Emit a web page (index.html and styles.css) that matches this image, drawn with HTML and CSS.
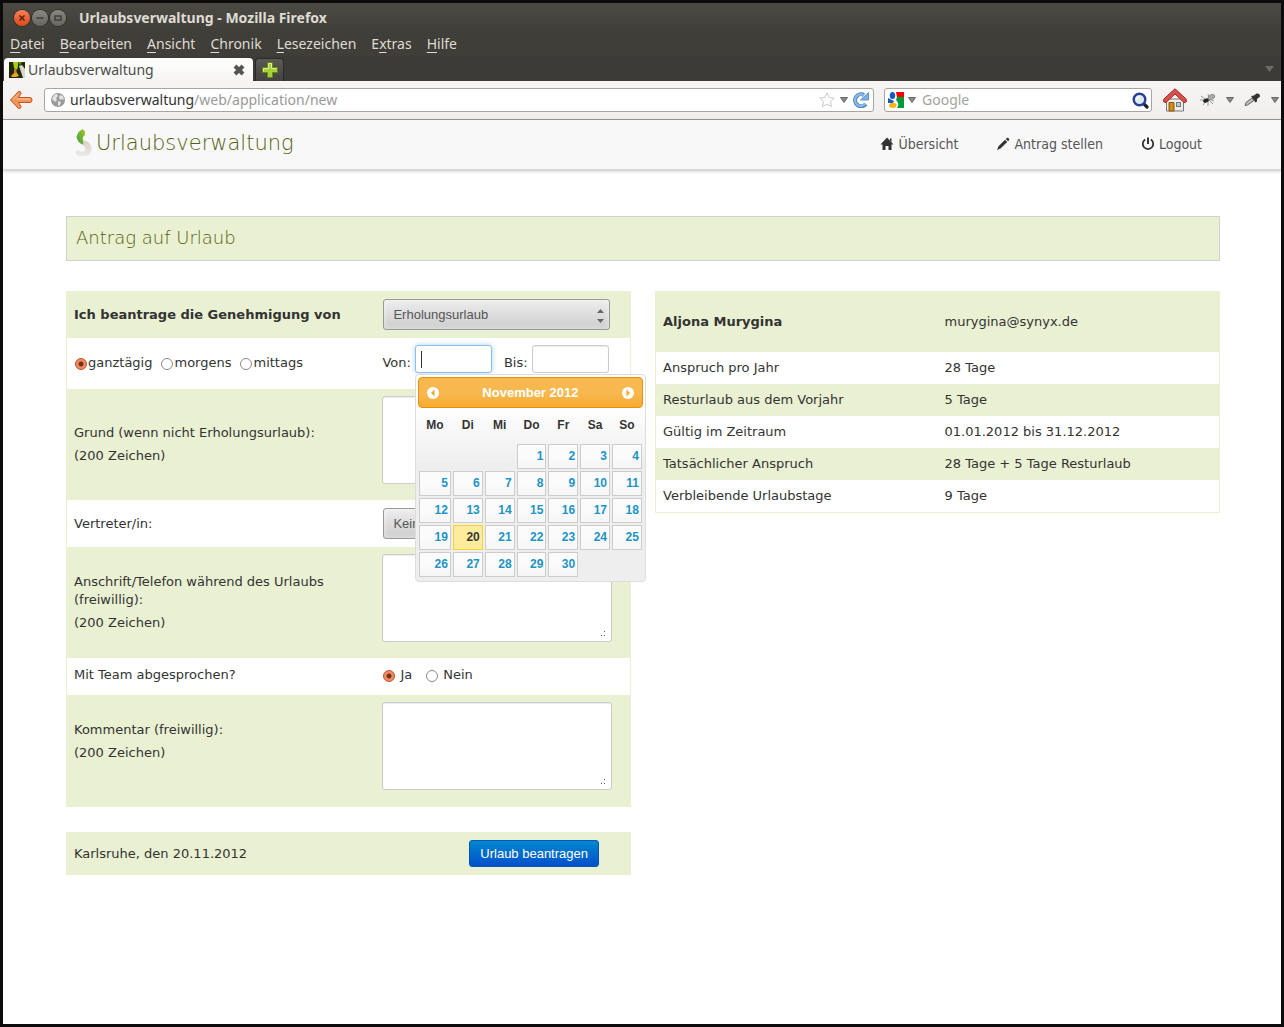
FILE: index.html
```html
<!DOCTYPE html>
<html lang="de">
<head>
  <meta charset="UTF-8">
  <meta name="viewport" content="width=device-width, initial-scale=1.0">
  <title>Urlaubsverwaltung</title>
  <link rel="stylesheet" href="styles.css">
</head>
<body>

<div class="window">

  <!-- Browser chrome -->
  <div class="titlebar">
    <button type="button" class="win-btn close" aria-label="Schließen">
      <svg width="16" height="16" viewBox="0 0 16 16"><path d="M5.5 5.5l5 5M10.5 5.5l-5 5" stroke="#4a2015" stroke-width="1.4"/></svg>
    </button>
    <button type="button" class="win-btn" aria-label="Minimieren">
      <svg width="16" height="16" viewBox="0 0 16 16"><path d="M4.500 8h7" stroke="#3a3934" stroke-width="1.4"/></svg>
    </button>
    <button type="button" class="win-btn" aria-label="Maximieren">
      <svg width="16" height="16" viewBox="0 0 16 16"><rect x="5" y="6" width="6" height="4" fill="none" stroke="#3a3934" stroke-width="1.300"/></svg>
    </button>
    <span class="window-title">Urlaubsverwaltung - Mozilla Firefox</span>
  </div>

  <div class="menubar">
    <a href="#"><u>D</u>atei</a>
    <a href="#"><u>B</u>earbeiten</a>
    <a href="#"><u>A</u>nsicht</a>
    <a href="#"><u>C</u>hronik</a>
    <a href="#"><u>L</u>esezeichen</a>
    <a href="#">E<u>x</u>tras</a>
    <a href="#"><u>H</u>ilfe</a>
  </div>

  <div class="tabs">
    <div class="tab">
      <svg width="16" height="16" viewBox="0 0 16 16">
        <rect width="16" height="16" fill="#1c2a05"/>
        <path d="M4 0h5v4l-1 4-3-2z" fill="#a6cf12"/>
        <path d="M10 4l3-1 3 4v9h-2z" fill="#d9d6d2"/>
        <path d="M9 0h4l-2 4z" fill="#5c8a12"/>
        <path d="M5 7h2l1 4H5z" fill="#c97a35"/>
        <path d="M2 14l3-3h3l2 3-3 1H3z" fill="#f0a021"/>
      </svg>
      <span class="tab-title">Urlaubsverwaltung</span>
      <button type="button" class="icon-btn" aria-label="Tab schließen">
        <svg width="14" height="14" viewBox="0 0 14 14"><path d="M3 3l8 8M11 3l-8 8" stroke="#55544f" stroke-width="4"/></svg>
      </button>
    </div>
    <button type="button" class="new-tab" aria-label="Neuer Tab">
      <svg width="16" height="16" viewBox="0 0 16 16"><path d="M5.500 .5h5v5h5v5h-5v5h-5v-5h-5v-5h5z" fill="#a9cf38" stroke="#5f8a14"/><path d="M1.500 9.500v-3h5v-5h3v5h5" fill="none" stroke="#dff08e"/></svg>
    </button>
    <svg class="tab-list" width="9" height="6" viewBox="0 0 9 6"><path d="M0 0h9L4.500 6z" fill="#6d6c68"/></svg>
  </div>

  <div class="toolbar">
    <button type="button" class="icon-btn" aria-label="Zurück">
      <svg width="24" height="20" viewBox="0 0 24 20"><path d="M1.500 10L9.500 1.500q2.500-.5 2.500 2L9.500 7.500H21q2 0 2 2.500t-2 2.500H9.500l2.500 4q0 2.500-2.500 2z" fill="#f0955a" stroke="#c8531c" stroke-linejoin="round"/><path d="M4 9.500l5-5M8 9h13" stroke="#fac9a5" fill="none"/></svg>
    </button>

    <div class="urlbar">
      <svg width="14" height="14" viewBox="0 0 14 14"><circle cx="7" cy="7" r="7" fill="#9a9a9a"/><path d="M1 6l2-4 3-1 1 2-2 2 1 2-2 2zM9 2l3 1 1 4-2-1-2 1-1-3zM7 8l3 1-1 3-2 1z" fill="#e4e4e4"/></svg>
      <label for="url">urlaubsverwaltung</label>
      <input type="text" id="url" value="/web/application/new">
      <svg width="16" height="16" viewBox="0 0 16 16"><path d="M8 .8l2.200 4.700 5.200.6-3.900 3.500 1.100 5.100L8 12.200l-4.600 2.500 1.100-5.100L.6 6.100l5.200-.6z" fill="#fff" stroke="#c9c9c9" stroke-linejoin="round"/></svg>
      <svg class="arrow" width="8" height="6" viewBox="0 0 8 6"><path d="M.5.5h7L4 5.500z" fill="#8b8b8b" stroke="#666"/></svg>
      <svg width="16" height="16" viewBox="0 0 16 16"><path d="M12.800 12A6 6 0 1 1 11 3" fill="none" stroke="#4a83bf" stroke-width="4"/><path d="M12.400 11.600A5.800 5.800 0 1 1 11 3.300" fill="none" stroke="#8fb9e2" stroke-width="2.200"/><path d="M15.500.5v7.500h-8z" fill="#7fb0de" stroke="#4a83bf" stroke-width=".8"/></svg>
    </div>

    <div class="searchbar">
      <svg width="16" height="16" viewBox="0 0 16 16">
        <rect width="16" height="16" fill="#fff"/>
        <path d="M8 0h8v5H9z" fill="#f00"/>
        <path d="M9 5h7v11H9q3-4-1-8z" fill="#009a3d"/>
        <ellipse cx="4.500" cy="3.500" rx="2.700" ry="3.500" fill="#1259c3"/>
        <path d="M0 6l6 3-1 2-5 0z" fill="#1259c3"/>
        <ellipse cx="4.800" cy="13.300" rx="3.800" ry="2.600" fill="#f5b70c"/>
      </svg>
      <svg class="arrow" width="8" height="6" viewBox="0 0 8 6"><path d="M.5.5h7L4 5.500z" fill="#8b8b8b" stroke="#666"/></svg>
      <input type="text" placeholder="Google" aria-label="Suche">
      <svg width="17" height="17" viewBox="0 0 17 17"><path d="M12 12l3 3" stroke="#222" stroke-width="3.200" stroke-linecap="round"/><circle cx="7.500" cy="7.500" r="5.800" fill="#dfe8f5" stroke="#2b3f94" stroke-width="2.400"/><path d="M4.800 7.500a2.700 2.700 0 0 1 2.700-2.700" fill="none" stroke="#fff" stroke-width="1.500"/></svg>
    </div>

    <button type="button" class="icon-btn home" aria-label="Startseite">
      <svg width="24" height="24" viewBox="0 0 24 24">
        <path d="M3.500 11h17v12h-17z" fill="#eeeeec" stroke="#777"/>
        <path d="M6 14.500h5V23H6z" fill="#cf8a1c" stroke="#8a5606"/>
        <rect x="13.500" y="14.500" width="4" height="4" fill="#b9cfd4" stroke="#777"/>
        <path d="M12 .8L.8 11v3l2.200.5L12 6l9 8.500 2.200-.5v-3z" fill="#d9504d" stroke="#a52724" stroke-linejoin="round"/>
      </svg>
    </button>
    <button type="button" class="icon-btn addon" aria-label="Firebug">
      <svg width="16" height="14" viewBox="0 0 16 14"><path d="M1 3l4 3M0 7h5M3 12l3-4M8 13V8M13 11L9 7M8 1l1 4M14 8l-5-2" stroke="#999"/><ellipse cx="6" cy="7.500" rx="3" ry="2" transform="rotate(-25 6 7.500)" fill="#222"/><ellipse cx="11.500" cy="4" rx="3.500" ry="2.300" transform="rotate(-25 11.500 4)" fill="#a9a9a9" stroke="#777" stroke-width=".6"/></svg>
    </button>
    <svg class="arrow" width="8" height="6" viewBox="0 0 8 6"><path d="M.5.5h7L4 5.500z" fill="#8b8b8b" stroke="#666"/></svg>
    <button type="button" class="icon-btn addon" aria-label="Pipette">
      <svg width="17" height="14" viewBox="0 0 17 14"><path d="M1 12.500l1-3L8 5l2 2.500-6.500 4.500z" fill="#bdbdbd" stroke="#666"/><path d="M7 3l3-.5L12.500.5q3.500-.5 3.500 3L13 6v2.500l-1.500 1z" fill="#333"/></svg>
    </button>
    <svg class="arrow" width="8" height="6" viewBox="0 0 8 6"><path d="M.5.5h7L4 5.500z" fill="#8b8b8b" stroke="#666"/></svg>
  </div>

  <!-- Page header -->
  <header class="header">
    <a class="brand" href="#">
      <svg width="18" height="28" viewBox="0 0 18 28">
        <defs>
          <linearGradient id="leaf" x1="1" y1="0" x2="0" y2="1"><stop offset="0" stop-color="#a6c822"/><stop offset="1" stop-color="#3f9a50"/></linearGradient>
          <linearGradient id="tail" x1="0" y1="0" x2="0" y2="1"><stop offset="0" stop-color="#d3d0c8"/><stop offset="1" stop-color="#eeebe7"/></linearGradient>
        </defs>
        <path d="M8 11q8.500 2 8.500 9-.5 7.500-8.500 7.500-5 0-7.500-3L2 21q4 2.500 7 1.500 3-2-1-7z" fill="url(#tail)"/>
        <path d="M7.500.3L10 2.200l-.2 4Q7 8 8 11l.3 5Q2 13 1.500 8 2.500 2.500 7.500.3z" fill="url(#leaf)"/>
      </svg>
      <span>Urlaubsverwaltung</span>
    </a>
    <nav class="nav">
      <a href="#">
        <svg width="14" height="14" viewBox="0 0 14 14"><path d="M7 .5L13.500 7.500H11.500V13H8.500V9h-3v4h-3V7.500H.5zM10 1.500h1.500V5L10 3.500z" fill="#333"/></svg>
        Übersicht
      </a>
      <a href="#">
        <svg width="14" height="14" viewBox="0 0 14 14"><path d="M11 .8q.6-.4 1.200.2l.8.8q.6.6.2 1.200l-1.200 1.200-2.200-2.200zM9 2.800L11.200 5 4.500 11.500 1 13l1.500-3.700z" fill="#333"/></svg>
        Antrag stellen
      </a>
      <a href="#">
        <svg width="14" height="14" viewBox="0 0 14 14"><path d="M4.200 2.500a5.200 5.200 0 1 0 5.600 0" fill="none" stroke="#333" stroke-width="1.800"/><path d="M7 .5v6.500" stroke="#333" stroke-width="2"/></svg>
        Logout
      </a>
    </nav>
  </header>

  <main class="content">
    <h1 class="page-title">Antrag auf Urlaub</h1>

    <div class="columns">
      <form class="application">
        <div class="form-rows">
          <div class="row short">
            <label class="strong" for="vacationType">Ich beantrage die Genehmigung von</label>
            <div class="select-box">
              <select id="vacationType"><option>Erholungsurlaub</option></select>
              <svg width="7" height="14" viewBox="0 0 7 14"><path d="M0 4L3.500 0 7 4zM0 10h7l-3.500 4z" fill="#666"/></svg>
            </div>
          </div>

          <div class="row dates">
            <div class="radios day-length">
              <label><input type="radio" name="length" checked>ganztägig</label>
              <label><input type="radio" name="length">morgens</label>
              <label><input type="radio" name="length">mittags</label>
            </div>
            <div class="period">
              <label for="from">Von:</label>
              <div class="date-field">
                <input class="active" type="text" id="from">
                <span class="caret"></span>

                <!-- Calendar popup -->
                <div class="datepicker">
                  <div class="dp-header">
                    <button type="button" class="icon-btn" aria-label="Zurück">
                      <svg width="12" height="12" viewBox="0 0 12 12"><circle cx="6" cy="6" r="6" fill="#fff"/><path d="M7.500 2.500v7L4 6z" fill="#f6a828"/></svg>
                    </button>
                    <span>November 2012</span>
                    <button type="button" class="icon-btn" aria-label="Vor">
                      <svg width="12" height="12" viewBox="0 0 12 12"><circle cx="6" cy="6" r="6" fill="#fff"/><path d="M4.500 2.500v7L8 6z" fill="#f6a828"/></svg>
                    </button>
                  </div>
                  <table>
                    <thead>
                      <tr><th>Mo</th><th>Di</th><th>Mi</th><th>Do</th><th>Fr</th><th>Sa</th><th>So</th></tr>
                    </thead>
                    <tbody>
                      <tr><td></td><td></td><td></td><td><a href="#">1</a></td><td><a href="#">2</a></td><td><a href="#">3</a></td><td><a href="#">4</a></td></tr>
                      <tr><td><a href="#">5</a></td><td><a href="#">6</a></td><td><a href="#">7</a></td><td><a href="#">8</a></td><td><a href="#">9</a></td><td><a href="#">10</a></td><td><a href="#">11</a></td></tr>
                      <tr><td><a href="#">12</a></td><td><a href="#">13</a></td><td><a href="#">14</a></td><td><a href="#">15</a></td><td><a href="#">16</a></td><td><a href="#">17</a></td><td><a href="#">18</a></td></tr>
                      <tr><td><a href="#">19</a></td><td><a class="today" href="#">20</a></td><td><a href="#">21</a></td><td><a href="#">22</a></td><td><a href="#">23</a></td><td><a href="#">24</a></td><td><a href="#">25</a></td></tr>
                      <tr><td><a href="#">26</a></td><td><a href="#">27</a></td><td><a href="#">28</a></td><td><a href="#">29</a></td><td><a href="#">30</a></td><td></td><td></td></tr>
                    </tbody>
                  </table>
                </div>
              </div>
              <label class="to" for="to">Bis:</label>
              <div class="date-field">
                <input type="text" id="to">
              </div>
            </div>
          </div>

          <div class="row tall">
            <label for="reason">Grund (wenn nicht Erholungsurlaub): <small>(200 Zeichen)</small></label>
            <div class="area"><textarea id="reason"></textarea></div>
          </div>

          <div class="row short">
            <label for="rep">Vertreter/in:</label>
            <div class="select-box">
              <select id="rep"><option>Kein Vertreter</option></select>
              <svg width="7" height="14" viewBox="0 0 7 14"><path d="M0 4L3.500 0 7 4zM0 10h7l-3.500 4z" fill="#666"/></svg>
            </div>
          </div>

          <div class="row tall">
            <label for="address">Anschrift/Telefon während des Urlaubs (freiwillig): <small>(200 Zeichen)</small></label>
            <div class="area">
              <textarea id="address"></textarea>
              <svg width="5" height="5" viewBox="0 0 5 5"><path d="M0 4h1v1H0zM3 4h1v1H3zM3 0h1v1H3z" fill="#555"/></svg>
            </div>
          </div>

          <div class="row team">
            <span>Mit Team abgesprochen?</span>
            <div class="radios">
              <label><input type="radio" name="team" checked>Ja</label>
              <label><input type="radio" name="team">Nein</label>
            </div>
          </div>

          <div class="row tall comment">
            <label for="comment">Kommentar (freiwillig): <small>(200 Zeichen)</small></label>
            <div class="area">
              <textarea id="comment"></textarea>
              <svg width="5" height="5" viewBox="0 0 5 5"><path d="M0 4h1v1H0zM3 4h1v1H3zM3 0h1v1H3z" fill="#555"/></svg>
            </div>
          </div>
        </div>

        <div class="submit-row">
          <span>Karlsruhe, den 20.11.2012</span>
          <button type="submit" class="btn-primary">Urlaub beantragen</button>
        </div>
      </form>

      <table class="account">
        <thead>
          <tr><th>Aljona Murygina</th><td>murygina@synyx.de</td></tr>
        </thead>
        <tbody>
          <tr><td>Anspruch pro Jahr</td><td>28 Tage</td></tr>
          <tr><td>Resturlaub aus dem Vorjahr</td><td>5 Tage</td></tr>
          <tr><td>Gültig im Zeitraum</td><td>01.01.2012 bis 31.12.2012</td></tr>
          <tr><td>Tatsächlicher Anspruch</td><td>28 Tage + 5 Tage Resturlaub</td></tr>
          <tr><td>Verbleibende Urlaubstage</td><td>9 Tage</td></tr>
        </tbody>
      </table>
    </div>
  </main>

</div>

</body>
</html>
```
FILE: styles.css
```css
/* General Styles */
* {
  box-sizing: border-box;
}

body {
  margin: 0;
  font-family: "DejaVu Sans", sans-serif;
  font-size: 13px;
  line-height: 18px;
  color: #333;
  background: #fff;
}

a {
  color: inherit;
  text-decoration: none;
}

svg {
  display: block;
  flex: none;
}

button {
  cursor: pointer;
}

.window {
  min-height: 100vh;
  border: 3px solid #0d0b0b;
  overflow: hidden;
}

.icon-btn {
  padding: 0;
  border: none;
  background: none;
}

/* Browser chrome */
.titlebar,
.menubar,
.tabs,
.toolbar {
  display: flex;
  align-items: center;
  font-family: "Noto Sans", sans-serif;
  font-size: 14px;
}

.titlebar {
  height: 29px;
  gap: 2px;
  padding-left: 11px;
  background: linear-gradient(#4b4a45, #3f3e39);
  color: #dfdbd2;
  font-weight: bold;
}

.win-btn {
  width: 16px;
  height: 16px;
  padding: 0;
  border: none;
  border-radius: 50%;
  background: linear-gradient(#8a8981, #66655f);
  box-shadow: 0 0 0 1px #34332f;
}

.win-btn.close {
  background: linear-gradient(#f58058, #df4a16);
}

.window-title {
  padding-left: 11px;
}

.menubar {
  height: 24px;
  gap: 15px;
  padding-left: 7px;
  background: #3f3e39;
  color: #dfdbd2;
}

.menubar u {
  text-underline-offset: 3px;
}

.tabs {
  height: 25px;
  align-items: flex-end;
  gap: 2px;
  padding-left: 1px;
  background: #3c3b37;
}

.tab {
  display: flex;
  align-items: center;
  gap: 3px;
  width: 249px;
  height: 23px;
  padding: 0 7px 0 5px;
  border-radius: 4px 4px 0 0;
  background: linear-gradient(#fff, #f5f4f2);
  color: #4c4c4c;
}

.tab-title {
  flex: 1;
}

.new-tab {
  display: flex;
  align-items: center;
  justify-content: center;
  width: 29px;
  height: 23px;
  padding: 0;
  border: 1px solid #2b2a27;
  border-bottom: none;
  border-radius: 4px 4px 0 0;
  background: linear-gradient(#5a5954, #43423e);
}

.tab-list {
  margin: 0 7px 9px auto;
}

.toolbar {
  height: 39px;
  padding: 0 2px 0 6px;
  border-bottom: 1px solid #999;
  background: linear-gradient(#f6f5f3, #f0efed);
}

.urlbar,
.searchbar {
  display: flex;
  align-items: center;
  height: 24px;
  border: 1px solid #a8a5a1;
  border-radius: 3px;
  background: #fff;
}

.urlbar {
  flex: 1;
  gap: 5px;
  margin: 0 10px 0 11px;
  padding: 0 4px 0 6px;
}

.urlbar input,
.searchbar input {
  flex: 1;
  min-width: 0;
  padding: 0;
  border: none;
  outline: none;
  background: none;
  font: inherit;
  color: #999;
}

.urlbar input {
  margin-left: -5px;
}

.searchbar {
  width: 268px;
  gap: 4px;
  padding: 0 2px 0 3px;
}

.searchbar input {
  margin-left: 2px;
}

.searchbar input::placeholder {
  color: #a5a29e;
}

.home {
  margin: 0 13px 0 11px;
}

.addon {
  margin: 0 10px 0 0;
}

.arrow + .addon {
  margin-left: 10px;
}

/* Page header */
.header {
  display: flex;
  justify-content: space-between;
  align-items: center;
  height: 50px;
  padding: 0 79px 4px 72px;
  background: #f8f8f8;
  border-bottom: 1px solid #d8d8d8;
  box-shadow: 0 1px 3px rgba(0, 0, 0, 0.25);
}

.brand {
  display: flex;
  align-items: center;
  gap: 3px;
  font-size: 21px;
  font-weight: 200;
  color: #556010;
}

.nav {
  display: flex;
  gap: 38px;
  padding-top: 2px;
  font-family: "DejaVu Sans Condensed", "DejaVu Sans", sans-serif;
  font-size: 14px;
  color: #555;
}

.nav a {
  display: flex;
  align-items: center;
  gap: 4px;
}

/* Content */
.content {
  padding: 46px 61px 60px 63px;
}

.page-title {
  margin: 0 0 30px;
  padding: 11px 9px 12px;
  border: 1px solid #d0d3cb;
  background: #eaf0d2;
  font-size: 18px;
  line-height: 20px;
  font-weight: 200;
  color: #556010;
}

.columns {
  display: grid;
  grid-template-columns: 1fr 1fr;
  align-items: start;
  gap: 24px;
}

.form-rows,
.account {
  border: 1px solid #eaf0d2;
  border-top: none;
}

.row {
  display: grid;
  grid-template-columns: 56% 1fr;
  column-gap: 1px;
  padding: 8px 7px;
}

.row:nth-child(odd) {
  background: #eaf0d2;
}

.row > label,
.row > span {
  align-self: center;
  padding-right: 40px;
}

.row small {
  display: block;
  margin-top: 5px;
  font-size: 13px;
}

.strong {
  font-weight: bold;
}

.dates,
.tall {
  padding: 7px 7px 16px;
}

.tall > label {
  padding-top: 9px;
}

.comment > label {
  padding-top: 0;
  padding-bottom: 10px;
}

.team {
  padding-bottom: 11px;
}

.radios {
  display: flex;
  align-items: center;
  gap: 13px;
}

.radios label {
  display: flex;
  align-items: center;
  gap: 5px;
}

.day-length {
  gap: 8px;
}

.day-length label {
  gap: 1px;
}

.day-length,
.period > label {
  padding-top: 7px;
}

input[type="radio"] {
  appearance: none;
  width: 12px;
  height: 12px;
  margin: 2px 0 0 1px;
  border: 1px solid #8f8a85;
  border-radius: 50%;
  background: #fff;
}

input[type="radio"]:checked {
  border-color: #b5532c;
  background: radial-gradient(circle, #6d3520 2px, #f58a60 3px);
}

/* Selects */
.select-box {
  position: relative;
  width: 227px;
  margin-left: 1px;
}

.select-box svg {
  position: absolute;
  top: 10px;
  right: 6px;
}

select {
  appearance: none;
  display: block;
  width: 100%;
  height: 31px;
  padding: 0 9px;
  border: 1px solid #999;
  border-radius: 3px;
  background: linear-gradient(#ededed, #cdcdcd);
  box-shadow: inset 0 0 5px rgba(255, 255, 255, 0.6);
  font-family: "Liberation Sans", Arial, sans-serif;
  font-size: 13px;
  color: #555;
}

/* Date fields */
.period {
  display: flex;
  align-items: center;
  gap: 4px;
}

.period .to {
  margin-left: 8px;
}

.date-field {
  position: relative;
}

.date-field input,
textarea {
  display: block;
  border: 1px solid #ccc;
  border-radius: 3px;
  outline: none;
  background: #fff;
  box-shadow: inset 0 1px 1px rgba(0, 0, 0, 0.08);
}

.date-field input {
  width: 77px;
  height: 28px;
}

.date-field .active {
  border-color: #8dbfe8;
  box-shadow: 0 0 5px rgba(82, 168, 236, 0.5);
}

.caret {
  position: absolute;
  top: 6px;
  left: 6px;
  width: 1px;
  height: 17px;
  background: #333;
}

.area {
  position: relative;
  width: 230px;
}

.area svg {
  position: absolute;
  right: 6px;
  bottom: 6px;
}

textarea {
  width: 100%;
  height: 88px;
  resize: none;
}

/* Calendar popup */
.datepicker {
  position: absolute;
  z-index: 2;
  top: 29px;
  left: 0;
  width: 231px;
  padding: 2px 2px 3px;
  border: 1px solid #ddd;
  border-radius: 4px;
  background: linear-gradient(#fff 30px, #eee 90px);
  font-family: "Liberation Sans", Arial, sans-serif;
  font-size: 12px;
  line-height: 17px;
  font-weight: bold;
}

.dp-header {
  display: flex;
  justify-content: space-between;
  align-items: center;
  height: 31px;
  padding: 0 8px;
  border: 1px solid #e78f08;
  border-radius: 4px;
  background: linear-gradient(#f8b850 50%, #f6ab30);
  color: #fff;
  font-size: 13px;
}

.datepicker table {
  width: 100%;
  border-collapse: collapse;
  table-layout: fixed;
}

.datepicker th {
  height: 35px;
  padding: 0;
}

.datepicker th:first-child {
  width: 34px;
}

.datepicker td {
  padding: 1px;
}

.datepicker td a {
  display: block;
  padding: 3px 2px;
  border: 1px solid #ccc;
  background: linear-gradient(#fbfbfb 50%, #f5f5f5);
  color: #1c94c4;
  text-align: right;
}

.datepicker td a.today {
  border-color: #fed22f;
  background: #ffeb9c;
  color: #363636;
}

/* Submit */
.submit-row {
  display: flex;
  justify-content: space-between;
  align-items: center;
  margin-top: 25px;
  padding: 8px 32px 8px 8px;
  background: #eaf0d2;
}

.btn-primary {
  height: 27px;
  padding: 0 10px;
  border: 1px solid #0055bb;
  border-radius: 3px;
  background: linear-gradient(#0088cc, #0050cc);
  color: #fff;
  font-family: "Liberation Sans", Arial, sans-serif;
  font-size: 13px;
}

/* Account table */
.account {
  width: 100%;
  border-collapse: separate;
  border-spacing: 0;
  table-layout: fixed;
}

.account th,
.account td {
  padding: 7px;
  text-align: left;
}

.account thead tr,
.account tbody tr:nth-child(even) {
  background: #eaf0d2;
}

.account thead th,
.account thead td {
  padding: 22px 7px 21px;
}
```
